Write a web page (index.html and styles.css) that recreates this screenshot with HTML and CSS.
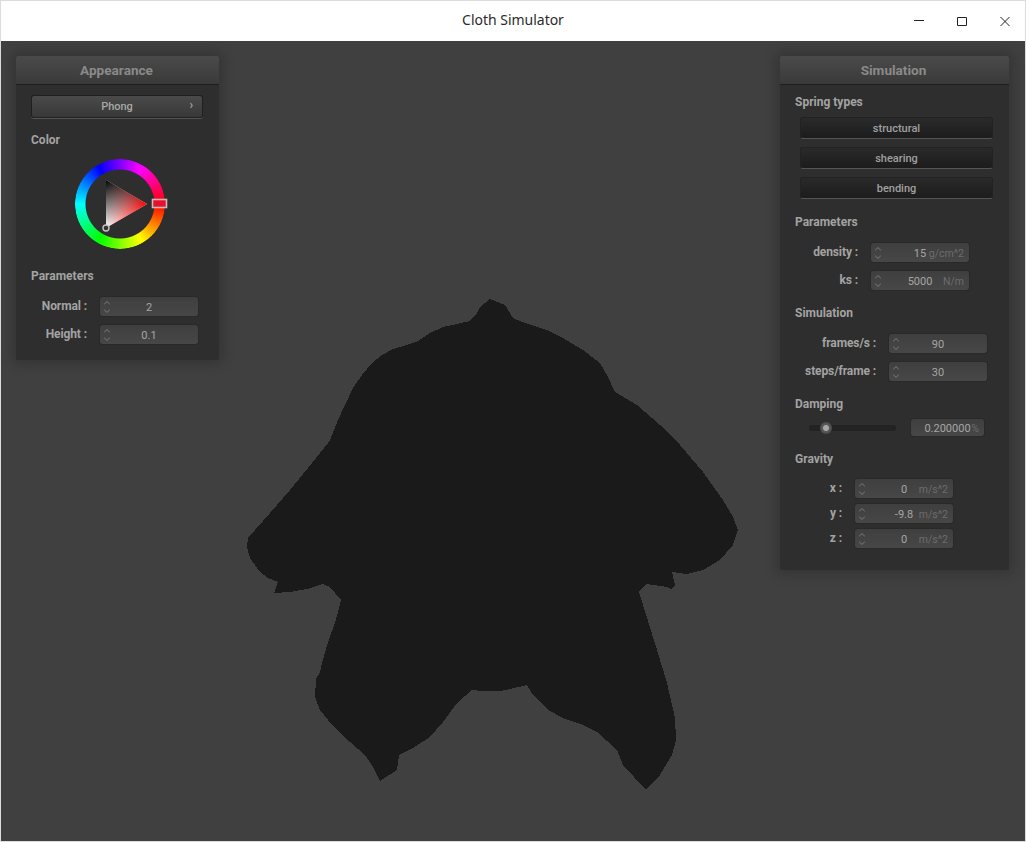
FILE: index.html
```html
<!DOCTYPE html>
<html lang="en">
<head>
<meta charset="utf-8">
<title>Cloth Simulator</title>
<link rel="stylesheet" href="styles.css">
</head>
<body>
<svg class="defs" width="0" height="0" aria-hidden="true">
  <symbol id="spin" viewBox="0 0 8 14">
    <path d="M1.2 4.2 4 1.6 6.8 4.2M1.2 9.8 4 12.4 6.8 9.8" fill="none" stroke="currentColor" stroke-width="1"/>
  </symbol>
</svg>
<div class="window">
  <header class="titlebar">
    <span class="title">Cloth Simulator</span>
    <div class="controls">
      <svg class="ctl" viewBox="0 0 12 12"><path d="M1 5.5H11" stroke="#222" fill="none"/></svg>
      <svg class="ctl" viewBox="0 0 12 12"><path d="M1.5 2.5H10.5V10.5H1.5Z" stroke="#222" fill="none"/></svg>
      <svg class="ctl" viewBox="0 0 12 12"><path d="M1.5 2 10.5 11M10.5 2 1.5 11" stroke="#222" fill="none"/></svg>
    </div>
  </header>
  <main class="canvas">
    <svg class="cloth" viewBox="1 41 1024 800" shape-rendering="crispEdges">
      <path fill="#1a1a1a" d="M490 299 480 307 477 313 470 321 457 324 443 327 430 333 418 341 407 345 393 349 382 355 372 363 362 375 353 388 345 405 338 420 330 440 328 443 312 463 290 490 270 513 248 538 247 547 250 558 260 572 268 578 278 582 274 593 290 592 307 589 323 584 330 587 341 600 338 612 335 623 328 642 322 663 320 672 316 679 315 697 320 710 332 725 350 742 365 755 373 767 380 781 397 770 399 755 413 748 430 737 443 722 457 703 472 690 482 691 500 691 510 689 527 685 533 695 548 710 563 718 583 725 597 732 617 750 623 765 646 790 660 775 672 755 676 740 675 718 667 683 657 650 639 592 646 584 667 587 671 589 675 585 672 572 687 574 703 570 720 560 733 545 738 530 733 517 723 500 703 472 680 445 660 425 637 405 615 392 608 377 600 363 583 350 563 338 547 330 522 322 513 318 505 305Z"/>
    </svg>

    <section class="panel panel-appearance">
      <h2 class="panel-head">Appearance</h2>
      <div class="panel-body body-appearance">
        <div class="popup-btn"><span></span><span>Phong</span><span class="chev">›</span></div>
        <h3 class="group first-gap">Color</h3>
        <svg class="wheel" viewBox="0 0 104 104">
          <defs>
            <linearGradient id="tri-red" gradientUnits="userSpaceOnUse" x1="79" y1="52" x2="38" y2="52">
              <stop offset="0" stop-color="#f00"/><stop offset="1" stop-color="#f00" stop-opacity="0"/>
            </linearGradient>
            <linearGradient id="tri-black" gradientUnits="userSpaceOnUse" x1="38" y1="28" x2="59" y2="64">
              <stop offset="0" stop-color="#000"/><stop offset="1" stop-color="#000" stop-opacity="0"/>
            </linearGradient>
          </defs>
          <foreignObject x="7" y="7" width="90" height="90"><div class="hue"></div></foreignObject>
          <path d="M79 52 38 28 38 76Z" fill="#fff"/>
          <path d="M79 52 38 28 38 76Z" fill="url(#tri-red)"/>
          <path d="M79 52 38 28 38 76Z" fill="url(#tri-black)"/>
          <rect x="84.5" y="47.5" width="14" height="8" fill="#e8102c" stroke="#c8bcbc" stroke-width="1.6"/>
          <circle cx="38" cy="76" r="3" fill="#333" stroke="#c4c4c4" stroke-width="1.4"/>
        </svg>
        <h3 class="group params-gap">Parameters</h3>
        <div class="rows">
          <div class="row"><label class="lbl lbl-a">Normal :</label><div class="field"><svg class="spin"><use href="#spin"/></svg><span class="val">2</span><span></span></div></div>
          <div class="row"><label class="lbl lbl-a">Height :</label><div class="field"><svg class="spin"><use href="#spin"/></svg><span class="val">0.1</span><span></span></div></div>
        </div>
      </div>
    </section>

    <section class="panel panel-simulation">
      <h2 class="panel-head">Simulation</h2>
      <div class="panel-body body-simulation">
        <h3 class="group">Spring types</h3>
        <div class="toggles">
          <div class="toggle">structural</div>
          <div class="toggle">shearing</div>
          <div class="toggle">bending</div>
        </div>
        <h3 class="group gap15">Parameters</h3>
        <div class="rows">
          <div class="row"><label class="lbl lbl-b">density :</label><div class="field"><svg class="spin"><use href="#spin"/></svg><span class="val">15</span><span class="unit">g/cm^2</span></div></div>
          <div class="row"><label class="lbl lbl-b">ks :</label><div class="field"><svg class="spin"><use href="#spin"/></svg><span class="val">5000</span><span class="unit">N/m</span></div></div>
        </div>
        <h3 class="group gap15">Simulation</h3>
        <div class="rows">
          <div class="row"><label class="lbl lbl-c">frames/s :</label><div class="field"><svg class="spin"><use href="#spin"/></svg><span class="val">90</span><span></span></div></div>
          <div class="row"><label class="lbl lbl-c">steps/frame :</label><div class="field"><svg class="spin"><use href="#spin"/></svg><span class="val">30</span><span></span></div></div>
        </div>
        <h3 class="group gap15">Damping</h3>
        <div class="slider-row">
          <div class="track"><span class="knob"></span></div>
          <div class="field field-short"><span></span><span class="val">0.200000</span><span class="unit">%</span></div>
        </div>
        <h3 class="group gap15">Gravity</h3>
        <div class="rows rows-tight">
          <div class="row"><label class="lbl lbl-d">x :</label><div class="field"><svg class="spin"><use href="#spin"/></svg><span class="val">0</span><span class="unit">m/s^2</span></div></div>
          <div class="row"><label class="lbl lbl-d">y :</label><div class="field"><svg class="spin"><use href="#spin"/></svg><span class="val">-9.8</span><span class="unit">m/s^2</span></div></div>
          <div class="row"><label class="lbl lbl-d">z :</label><div class="field"><svg class="spin"><use href="#spin"/></svg><span class="val">0</span><span class="unit">m/s^2</span></div></div>
        </div>
      </div>
    </section>
  </main>
</div>
</body>
</html>
```
FILE: styles.css
```css
* { box-sizing: border-box; }
html, body { margin: 0; padding: 0; }
body { width: 1026px; height: 842px; overflow: hidden; background: #fff; font-family: Roboto, "Liberation Sans", sans-serif; }
.defs { position: absolute; }

.window { width: 1026px; height: 842px; border: 1px solid #dcdcdc; display: flex; flex-direction: column; }
.titlebar { height: 40px; flex: none; background: #fff; display: grid; grid-template-columns: 1fr auto 1fr; align-items: center; }
.title { grid-column: 2; font: 14px/18px "Noto Sans", "Open Sans", sans-serif; color: #2b2b2b; margin-top: -2px; letter-spacing: -0.02px; }
.controls { grid-column: 3; justify-self: end; display: flex; gap: 31px; padding-right: 14px; }
.ctl { width: 12px; height: 12px; display: block; }

.canvas { flex: 1; position: relative; background: #404040; }
.cloth { position: absolute; inset: 0; width: 1024px; height: 800px; display: block; }

.panel { position: absolute; top: 15px; background: #2e2e2e; border-radius: 2px; box-shadow: 0 0 13px 4px rgba(0, 0, 0, 0.2); }
.panel-appearance { left: 15px; width: 203px; }
.panel-simulation { left: 779px; width: 229px; }
.panel-head { margin: 0; height: 29px; padding-right: 2px; background: linear-gradient(#4a4a4a, #3a3a3a); border-bottom: 1px solid #1e1e1e; border-radius: 2px 2px 0 0; text-align: center; font-size: 13.6px; line-height: 28px; font-weight: 700; color: #8a8a8a; }

.body-appearance { padding: 10px 15px 16px 15px; }
.body-simulation { padding: 9px 0 22px 0; }
.group { margin: 0; font-size: 12px; line-height: 16px; font-weight: 700; color: #a3a3a3; }
.body-simulation .group { margin-left: 15px; }
.first-gap { margin-top: 14px; }
.params-gap { margin-top: 12px; }
.body-simulation .gap15 { margin-top: 15px; }

.popup-btn { width: 172px; height: 23px; display: grid; grid-template-columns: 1fr auto 1fr; align-items: center; background: linear-gradient(#4a4a4a, #383838); border: 1px solid #1f1f1f; border-bottom-color: #222; border-radius: 3px; font-size: 11px; font-weight: 500; color: #a8a8a8; box-shadow: 0 1px 0 #555; }
.chev { justify-self: end; padding-right: 9px; font-size: 12px; line-height: 12px; margin-top: -3px; color: #aaa; }

.wheel { display: block; width: 104px; height: 104px; margin: 4px 0 0 37px; }
.hue { width: 90px; height: 90px; border-radius: 50%; background: conic-gradient(from 90deg, #f00, #ff0, #0f0, #0ff, #00f, #f0f, #f00); -webkit-mask: radial-gradient(circle, transparent 34px, #000 35px); mask: radial-gradient(circle, transparent 34px, #000 35px); }

.rows { display: flex; flex-direction: column; gap: 9px; margin-top: 13px; }
.rows-tight { gap: 6px; margin-top: 12px; }
.row { display: flex; align-items: center; gap: 13px; }
.lbl { display: block; padding-bottom: 2px; text-align: right; font-size: 12px; font-weight: 700; color: #a3a3a3; letter-spacing: -0.1px; white-space: nowrap; }
.lbl-a { width: 56px; }
.lbl-b { width: 78px; }
.lbl-c { width: 96px; }
.lbl-d { width: 62px; }

.field { width: 98px; height: 19px; flex: none; display: grid; grid-template-columns: 1fr auto 1fr; align-items: center; padding: 0 5px; background: linear-gradient(#3f3f3f, #474747); box-shadow: 0 0 0 1px #292929; border-radius: 3px; font-size: 11px; color: #a6a6a6; }
.spin { width: 8px; height: 14px; margin-left: -2px; color: #7a7a7a; display: block; }
.val { grid-column: 2; padding-top: 1px; }
.unit { grid-column: 3; justify-self: end; color: #6c6c6c; font-size: 10.5px; padding-top: 1px; white-space: nowrap; }

.toggles { display: flex; flex-direction: column; gap: 8px; margin: 7px 0 0 20px; width: 193px; }
.toggle { height: 22px; background: linear-gradient(#2a2a2a, #1c1c1c); border: 1px solid #222; border-bottom-color: #555; border-radius: 3px; text-align: center; font-size: 11px; line-height: 21px; font-weight: 500; color: #a0a0a0; }

.slider-row { display: flex; align-items: center; gap: 15px; margin: 7px 0 0 29px; }
.track { position: relative; width: 87px; height: 6px; background: #232323; border-radius: 3px; }
.knob { position: absolute; left: 11px; top: -3px; width: 12px; height: 12px; border-radius: 50%; background: radial-gradient(circle, #a8a8a8 0 2.5px, #5a5a5a 3.5px, #4a4a4a 6px); }
.field-short { width: 73px; height: 17px; }
```
